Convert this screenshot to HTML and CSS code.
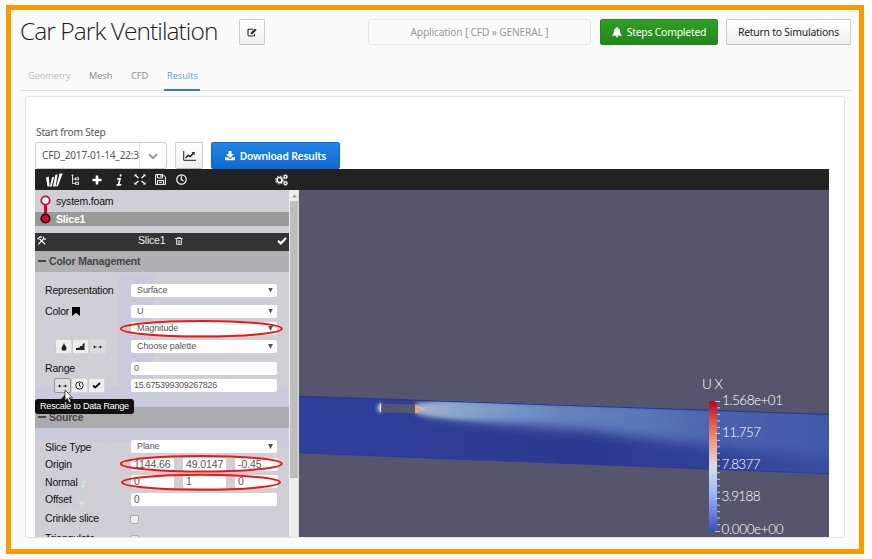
FILE: index.html
```html
<!DOCTYPE html>
<html lang="en">
<head>
<meta charset="utf-8">
<title>Car Park Ventilation</title>
<link rel="stylesheet" href="styles.css">
</head>
<body>
<div class="frame">
  <header class="header">
    <h1 class="title">Car Park Ventilation</h1>
    <button class="btn edit"><svg width="10" height="9" viewBox="0 0 10 9" fill="none" stroke="#222"><path d="M6 1.2H2.2Q1 1.2 1 2.4V6.8Q1 8 2.2 8H6.4Q7.6 8 7.6 6.8V5.8" stroke-width="1.1"/><path d="M3.8 6L4.2 4.4L8 .8L9.3 2.1L5.5 5.7Z" fill="#222" stroke-width=".5"/></svg></button>
    <div class="app-name"><span>Application [ CFD » GENERAL ]</span></div>
    <button class="btn green"><svg width="10" height="11" viewBox="0 0 10 11" fill="#fff"><path d="M5 0Q5.8 0 5.8 1Q8 1.5 8.1 4.4Q8.2 7.2 10 8.8H0Q1.800 7.200 1.900 4.400Q2 1.500 4.200 1Q4.200 0 5 0ZM3.700 9.300H6.300Q6 10.600 5 10.600Q4 10.600 3.700 9.300Z"/></svg><span>Steps Completed</span></button>
    <button class="btn return"><span>Return to Simulations</span></button>
  </header>
  <nav class="tabs">
    <a class="tab muted">Geometry</a><a class="tab mesh">Mesh</a><a class="tab cfd">CFD</a><a class="tab active">Results</a>
  </nav>
  <main class="card">
    <div class="step-label"><span>Start from Step</span></div>
    <div class="step-row">
      <div class="step-select"><span class="step-value">CFD_2017-01-14_22:3</span><span class="step-arrow"><svg width="10" height="7" viewBox="0 0 10 7" fill="none" stroke="#999" stroke-width="2"><path d="M1 1.200L5 5.200L9 1.200"/></svg></span></div>
      <button class="btn chart"><svg width="13" height="10" viewBox="0 0 13 10" fill="none" stroke="#222"><path d="M.7 0V9.300H13"/><path d="M2.500 7L5.300 4.300L7 5.800L10.500 2.200" stroke-width="1.500"/><path d="M8.500 1H11.700V4.200Z" fill="#222" stroke="none"/></svg></button>
      <button class="btn download"><svg width="10" height="10" viewBox="0 0 10 10" fill="#fff"><path d="M3.500 0H6.500V3.300H9L5 7L1 3.300H3.500ZM0 6.300H2.800L5 8.200L7.200 6.300H10V9.300H0Z"/></svg><span>Download Results</span></button>
    </div>
    <section class="viewer">
      <div class="toolbar">
        <svg class="t-logo" width="17" height="14" viewBox="0 0 17 14" fill="#fff"><path d="M0 4.500L2.800 3.500L3.600 13.500H1.400ZM6 4.500L8.200 3.500L5.800 13.500H3.900ZM9.300 2L11.500 1.300L9.700 13.500H7ZM13.600 .5H16.700L11.700 13.500H10.200Z"/></svg>
        <svg class="t-tree" width="8" height="11" viewBox="0 0 8 11" fill="none" stroke="#ddd"><path d="M1.500 1V9.500H4M1.500 5H4"/><circle cx="1.500" cy="1.500" r="1" fill="#ddd" stroke="none"/><rect x="4.500" y="3.800" width="3" height="2"/><rect x="4.500" y="8.300" width="3" height="2"/></svg>
        <svg class="t-plus" width="10" height="10" viewBox="0 0 10 10" stroke="#fff" stroke-width="2.600"><path d="M5 .5V9.500M.5 5H9.500"/></svg>
        <svg class="t-info" width="7" height="12" viewBox="0 0 7 12" fill="none" stroke="#fff"><path d="M4.800 .4L4.400 2.500M1.200 4.800H4L2.600 10.800H5.200M.6 10.800H2.600" stroke-width="1.700"/></svg>
        <svg class="t-expand" width="12" height="11" viewBox="0 0 12 11" fill="none" stroke="#fff"><path d="M1 1L4.500 4M11 1L7.500 4M1 10L4.500 7M11 10L7.500 7" stroke-width="1.300"/><path d="M.6 2.800V.6H3M9 .6H11.400V2.800M.6 8.200V10.400H3M9 10.400H11.400V8.200" stroke-width=".5"/></svg>
        <svg class="t-save" width="11" height="11" viewBox="0 0 11 11" fill="none" stroke="#fff"><path d="M.6 .6H8L10.400 3V10.400H.6ZM2.500 .6V4H7.500V.6M2.500 10V6.500H8.500V10M6 1V3M4 8.300H7"/></svg>
        <svg class="t-clock" width="11" height="11" viewBox="0 0 11 11" fill="none" stroke="#fff" stroke-width="1.200"><circle cx="5.500" cy="5.500" r="4.700"/><path d="M5.300 2.300V5.800L7.500 7"/></svg>
        <svg class="t-gears" width="13" height="12" viewBox="0 0 13 12" fill="none" stroke="#fff"><circle cx="4.500" cy="6" r="2.500" stroke-width="1.700"/><circle cx="4.500" cy="6" r="3.900" stroke-dasharray="1.700 1.360"/><circle cx="10.500" cy="2.700" r="1.400" stroke-width="1.200"/><circle cx="10.500" cy="2.700" r="2.200" stroke-width=".7" stroke-dasharray="1 .7"/><circle cx="10.500" cy="9.200" r="1.400" stroke-width="1.200"/><circle cx="10.500" cy="9.200" r="2.200" stroke-width=".7" stroke-dasharray="1 .7"/></svg>
      </div>
      <div class="stage">
        <aside class="panel">
          <div class="pipeline">
            <div class="node">system.foam</div>
            <div class="node selected">Slice1</div>
            <svg class="graph" width="16" height="36" viewBox="0 0 16 36"><path d="M10.500 10V28" stroke="#dd0031" stroke-width="3"/><circle cx="10.500" cy="10.500" r="4.200" fill="#fff" stroke="#dd0031" stroke-width="1.800"/><circle cx="10.500" cy="28.500" r="4.300" fill="#e4002b" stroke="#180408" stroke-width="1.500"/></svg>
          </div>
          <div class="control-bar">
            <svg class="c-tools" width="10" height="9" viewBox="0 0 11 10" fill="none" stroke="#fff" stroke-width="1.300"><path d="M1.500 9.200L7.300 3M7 .8Q6.500 3.700 10 3.500M2.800 3.200L9 9.200M.5 3.600L3.500 .8L5.300 1.200"/></svg>
            <span class="c-name">Slice1</span>
            <svg class="c-trash" width="8" height="8" viewBox="0 0 8 8" fill="none" stroke="#ddd"><path d="M0 1.500H8M2.500 1.500V.5H5.500V1.500M1.500 2V7.500H6.500V2M3.200 3V7M4.800 3V7" stroke-width=".9"/></svg>
            <svg class="c-check" width="10" height="8" viewBox="0 0 10 8" fill="none" stroke="#fff" stroke-width="2.300"><path d="M1 3.800L3.800 6.300L9 1"/></svg>
          </div>
          <div class="section-title"><i></i><span>Color Management</span></div>
          <div class="form color-form">
            <label>Representation</label><div class="field select">Surface</div>
            <label class="color-label">Color <svg width="8" height="9" viewBox="0 0 8 9"><path d="M0 0H8V9L4 5.800L0 9Z"/></svg></label><div class="field select">U</div>
            <label></label><div class="field select">Magnitude</div>
            <div class="tools upper">
              <b><svg width="6" height="8" viewBox="0 0 6 8"><path d="M3 0Q3.600 1.800 4.800 3.200Q6 5 5.300 6.400Q4.600 7.700 3 7.700Q1.400 7.700 .7 6.400Q0 5 1.200 3.200Q2.400 1.800 3 0Z"/></svg></b>
              <b><svg width="9" height="7" viewBox="0 0 9 7"><path d="M0 5H2V7H0ZM2 4.500H4V7H2ZM4 3H6.500V7H4ZM6.500 1L8.500 0V7H6.500Z"/></svg></b>
              <b class="flat"><svg width="9" height="4" viewBox="0 0 9 4"><path d="M0 2L2 .5V1.400H3.500V2.600H2V3.500ZM9 2L7 .5V1.400H5.500V2.600H7V3.500Z"/></svg></b>
            </div><div class="field select">Choose palette</div>
            <label>Range</label><div class="field">0</div>
            <div class="tools">
              <b class="hover"><svg width="9" height="4" viewBox="0 0 9 4"><path d="M0 2L2 .5V1.400H3.500V2.600H2V3.500ZM9 2L7 .5V1.400H5.500V2.600H7V3.500Z"/></svg></b>
              <b><svg width="9" height="9" viewBox="0 0 9 9" fill="none" stroke="#222"><circle cx="4.500" cy="4.500" r="3.700"/><path d="M4.500 2V5L6 5.600"/></svg></b>
              <b><svg width="9" height="7" viewBox="0 0 9 7" fill="none" stroke="#111" stroke-width="2"><path d="M1 3.500L3.300 5.500L8 1"/></svg></b>
            </div><div class="field number">15.675399309267826</div>
          </div>
          <div class="section-title source"><i></i><span>Source</span></div>
          <div class="form source-form">
            <label>Slice Type</label><div class="field select">Plane</div>
            <label>Origin</label><div class="triple"><div class="field">1144.66</div><div class="field">49.0147</div><div class="field">-0.45</div></div>
            <label>Normal</label><div class="triple"><div class="field">0</div><div class="field">1</div><div class="field">0</div></div>
            <label>Offset</label><div class="field offset">0</div>
            <label>Crinkle slice</label><div class="check"></div>
            <label>Triangulate</label><div class="check"></div>
          </div>
          <svg class="marks" width="264" height="347" viewBox="35 190 264 347">
            <g fill="none" stroke="#f21515" stroke-width="2"><ellipse cx="201.300" cy="328.700" rx="80.500" ry="7.800"/><ellipse cx="201.300" cy="463.800" rx="80.500" ry="7.800"/><ellipse cx="201" cy="482.300" rx="79" ry="7.500"/></g>
            <path d="M81.500 487V504" stroke="#b5dcb9"/><path d="M58 505.500H68M74 505.500H81" stroke="#dfbdba"/>
            <g fill="#e8e8ef" font-family="Lato, sans-serif" font-size="8"><text x="81" y="487">Z</text><text x="79" y="507">Y</text></g>
          </svg>
          <div class="tooltip">Rescale to Data Range</div>
          <svg class="cursor" width="10" height="15" viewBox="0 0 10 15"><path d="M1 1V11.500L3.300 9.400L5.100 13.500L6.900 12.700L5.200 8.800H8.500Z" fill="#fff" stroke="#222" stroke-width=".8"/></svg>
        </aside>
        <div class="scroll"><span></span><div class="thumb"></div></div>
        <svg class="canvas" width="530" height="347" viewBox="299 190 530 347">
          <defs>
            <linearGradient id="flow" x1="420" y1="0" x2="829" y2="0" gradientUnits="userSpaceOnUse"><stop offset="0" stop-color="#86a2d0"/><stop offset=".25" stop-color="#6d8cc4"/><stop offset=".55" stop-color="#5877b8"/><stop offset=".75" stop-color="#4961ad"/><stop offset="1" stop-color="#4259a9"/></linearGradient>
            <linearGradient id="plume" x1="417" y1="0" x2="560" y2="0" gradientUnits="userSpaceOnUse"><stop offset="0" stop-color="#a5b6cb"/><stop offset=".3" stop-color="#8aa4ca"/><stop offset="1" stop-color="#7896c9" stop-opacity="0"/></linearGradient>
            <linearGradient id="base" x1="300" y1="0" x2="829" y2="0" gradientUnits="userSpaceOnUse"><stop offset="0" stop-color="#2f3f9c"/><stop offset=".55" stop-color="#2d3990"/><stop offset=".8" stop-color="#32439a"/><stop offset="1" stop-color="#3a4e9f"/></linearGradient>
            <linearGradient id="scale" x1="0" y1="0" x2="0" y2="1"><stop offset="0" stop-color="#b40426"/><stop offset=".12" stop-color="#d8453b"/><stop offset=".3" stop-color="#f3977c"/><stop offset=".5" stop-color="#dddddd"/><stop offset=".7" stop-color="#9bbcff"/><stop offset="1" stop-color="#3b4cc0"/></linearGradient>
            <radialGradient id="halo"><stop offset="0" stop-color="#b9d2e5"/><stop offset="1" stop-color="#5478bd" stop-opacity="0"/></radialGradient>
            <filter id="soft" x="-20%" y="-40%" width="140%" height="180%"><feGaussianBlur stdDeviation="6"/></filter>
            <filter id="small" x="-20%" y="-50%" width="140%" height="200%"><feGaussianBlur stdDeviation="2"/></filter>
            <clipPath id="duct"><path d="M299 395.700L829 413.700V474.300L299 453.300Z"/></clipPath>
          </defs>
          <rect x="299" y="190" width="530" height="347" fill="#55566d"/>
          <g clip-path="url(#duct)">
            <rect x="299" y="390" width="530" height="90" fill="url(#base)"/>
            <path d="M424 406L450 396L850 404V460Q700 446 590 430Q480 423 424 412Z" fill="url(#flow)" filter="url(#soft)"/>
            <path d="M416 403Q450 400 570 405V420Q470 424 416 414Z" fill="url(#plume)" filter="url(#small)"/>
            <ellipse cx="380" cy="408" rx="6" ry="8" fill="url(#halo)"/>
            <path d="M299 396.200L829 414.200" stroke="#2b378a" stroke-width="1.500"/>
            <path d="M299 452.800L829 473.800" stroke="#2d3b9a" stroke-width="1"/>
            <path d="M380.500 403.500L415.500 404.500V413.500L380.500 412.300Z" fill="#55566d"/>
            <path d="M380.500 403.500V412" stroke="#e1e6cf" stroke-width="1.300"/>
            <path d="M415 404.500L419 405.500L421.500 409L419 412.500L415 413.500Z" fill="#dda78d"/><path d="M420 406.500L427 409L420 411.500Z" fill="#c9bcb8" opacity=".7"/>
          </g>
          <rect x="709" y="401.300" width="8" height="130" fill="url(#scale)"/>
          <path d="M717 407.900H720M717 414.400H720M717 420.900H720M717 427.400H720M717 440.400H720M717 446.800H720M717 453.300H720M717 459.800H720M717 472.800H720M717 479.300H720M717 485.800H720M717 492.200H720M717 505.200H720M717 511.700H720M717 518.200H720M717 524.700H720M715 401.500H720M715 433.500H720M715 466H720M715 498.500H720M715 531.500H720" stroke="#d5d5dc" stroke-width=".9"/>
          <g class="legend">
            <text x="702" y="389" textLength="21">U X</text>
            <text x="722" y="404.500" textLength="61">1.568e+01</text>
            <text x="722" y="436.700" textLength="39">11.757</text>
            <text x="721.500" y="469" textLength="39">7.8377</text>
            <text x="721.500" y="501.300" textLength="39">3.9188</text>
            <text x="721.500" y="533.700" textLength="62">0.000e+00</text>
          </g>
        </svg>
      </div>
    </section>
  </main>
</div>
</body>
</html>
```

FILE: styles.css
```css
* { box-sizing: border-box; }
body { margin: 0; padding: 5px 8px 5px 6px; width: 872px; height: 559px; background: #fff; overflow: hidden; font-family: "Noto Sans", sans-serif; }
svg { display: block; flex: none; }
.frame { width: 858px; height: 549px; border: 5px solid #ff9900; background: #fafafa; }

.header { display: flex; height: 51px; padding: 9px 8px 0 9px; }
.title { margin: -9px 0 0; width: 219px; height: 44px; line-height: 42px; font-family: "Open Sans", sans-serif; font-weight: 300; font-size: 24.500px; letter-spacing: -.93px; white-space: nowrap; color: #1c1c1c; }
.btn { display: flex; align-items: center; justify-content: center; height: 26px; padding: 0; border: 1px solid #ccc; border-bottom-color: #bbb; border-radius: 2px; background: linear-gradient(#fff, #f0f0f0); font: 10.400px "Noto Sans", sans-serif; letter-spacing: -.22px; color: #222; white-space: nowrap; }
.edit { width: 26px; }
.app-name { display: flex; align-items: center; justify-content: center; width: 223px; height: 26px; margin-left: 103px; border: 1px solid #e4e4e4; border-radius: 3px; font-size: 10.200px; letter-spacing: -.16px; color: #999; white-space: nowrap; }
.green { width: 118px; margin-left: 9px; gap: 5px; color: #fff; background: linear-gradient(#2fa024, #23861b); border-color: #26891e; }
.return { width: 125px; margin-left: 8px; }

.tabs { display: flex; height: 30px; margin: 0 8px 0 9px; padding-left: 2px; border-bottom: 1px solid #ddd; font: 9.200px/30px "Open Sans", sans-serif; }
.tab { height: 30px; padding-left: 6px; color: #888; }
.muted { width: 61px; color: #bbb; }
.mesh { width: 42px; }
.cfd { width: 39px; }
.active { width: 36px; padding-left: 3px; color: #5a9fd4; border-bottom: 2px solid #3f78b5; }

.card { width: 820px; height: 442px; margin: 5px 0 0 14px; padding: 0 15px 0 9px; border: 1px solid #e5e5e5; border-radius: 3px; background: #fff; }
.step-label { height: 45px; padding: 27px 0 0 1px; line-height: 16px; font-size: 10.200px; letter-spacing: -.2px; color: #555; }
.step-row { display: flex; height: 27px; }
.step-select { display: flex; width: 132px; height: 27px; border: 1px solid #ccc; border-radius: 3px; font-size: 10.100px; letter-spacing: -.2px; line-height: 25px; color: #555; }
.step-value { width: 104px; padding-left: 6px; overflow: hidden; white-space: nowrap; border-right: 1px solid #e3e3e3; }
.step-arrow { flex: 1; display: flex; align-items: center; justify-content: center; padding-top: 2px; }
.chart { width: 28px; height: 27px; margin-left: 8px; }
.download { width: 129px; height: 27px; margin-left: 8px; gap: 5px; background: linear-gradient(#1f85e3, #1269d3); border-color: #1567c5; color: #fff; font-weight: 600; font-size: 10.300px; letter-spacing: -.2px; }

.viewer { width: 794px; height: 368px; overflow: hidden; }
.toolbar { display: flex; align-items: center; height: 21px; padding-left: 11px; background: #222; }
.t-tree { margin-left: 8px; }
.t-plus { margin-left: 13px; }
.t-info { margin-left: 14px; }
.t-expand { margin-left: 11px; }
.t-save { margin-left: 9px; }
.t-clock { margin-left: 10px; }
.t-gears { margin-left: 88px; }
.stage { display: flex; height: 347px; }
.panel { position: relative; width: 254px; height: 347px; overflow: hidden; background: #d0cfd5; font: 10.500px "Liberation Sans", sans-serif; letter-spacing: -.2px; color: #111; }
.pipeline { position: relative; height: 43px; }
.node { height: 22px; padding-left: 21px; line-height: 22px; }
.selected { height: 14px; line-height: 14px; background: #999; color: #fff; font-weight: bold; }
.graph { position: absolute; left: 0; top: 0; }
.control-bar { display: flex; align-items: center; height: 18px; padding: 0 2px; background: #333; color: #eee; }
.c-tools { margin-top: -3px; }
.c-name { width: 37px; margin-left: 91px; line-height: 14px; padding-bottom: 4px; }
.c-trash { margin-top: -3px; }
.c-check { margin: -3px 0 0 auto; }
.section-title { display: flex; align-items: center; gap: 3px; height: 21px; padding: 0 0 1px 3px; background: #b0b0b2; font-weight: bold; color: #444; }
.section-title i { width: 8px; height: 2px; background: #444; }
.form { display: grid; grid-template-columns: 86px 146px; padding-left: 10px; align-items: center; }
.form label { display: flex; align-items: center; white-space: nowrap; }
.color-form { height: 135px; padding-top: 8px; grid-template-rows: 20px 22px 13px 23px 20px 15px 14px; background: linear-gradient(#c9cbdc, #c9cbdc) 0 115px / 254px 20px no-repeat, linear-gradient(#c9cbdc, #c9cbdc) 84px 3px / 35px 132px no-repeat; }
.source { background: #aaaab1; }
.source-form { padding-top: 10px; grid-template-rows: 17px 18px 17px 18px 19px 22px; background: linear-gradient(182deg, #c9cbdc 19px, #d0cfd5 21px); }
.color-label { gap: 3px; }
.field { height: 13px; padding-left: 3px; border-radius: 2px; background: #fff; font-size: 9px; line-height: 13px; letter-spacing: -.1px; color: #555; white-space: nowrap; }
.number { letter-spacing: -.25px; }
.offset { font-size: 10px; }
.select { display: flex; justify-content: space-between; padding: 0 4px 0 6px; }
.select::after { content: ""; width: 5px; height: 5px; margin-top: 4px; background: #555; clip-path: polygon(0 0, 100% 0, 50% 100%); }
.triple { display: grid; grid-template-columns: 43px 43px 43px; gap: 9px; }
.triple .field { font-size: 10.500px; }
.check { width: 9px; height: 9px; margin-top: 3px; margin-left: -1px; border: 1px solid #aaa; border-radius: 2px; background: #eee; }
.tools { display: flex; padding-left: 9px; }
.upper { padding-left: 10px; }
.tools b { display: flex; align-items: center; justify-content: center; width: 17px; height: 15px; border: 1px solid #d6d6d8; border-left-color: #ccc; border-radius: 2px; background: #eee; }
.tools .flat { background: #dcdcdf; }
.tools .hover { border-color: #999; background: #ddd; }
.tools svg { fill: #222; }
.tools svg[fill="none"] { fill: none; }
.marks { position: absolute; left: 0; top: 0; }
.tooltip { position: absolute; left: 0; top: 209px; width: 99px; height: 15px; border-radius: 3px; background: #111; color: #fff; font-size: 9px; line-height: 14px; text-align: center; white-space: nowrap; }
.tooltip::before { content: ""; position: absolute; left: 26px; top: -5px; border: 5px solid transparent; border-top: 0; border-bottom-color: #111; }
.cursor { position: absolute; left: 29px; top: 199px; }
.scroll { width: 10px; padding-left: 1px; background: #eee; border-right: 1px solid #ddd; }
.scroll span { display: block; width: 5px; height: 11px; margin-left: 2px; background: #999; clip-path: polygon(50% 40%, 100% 68%, 0 68%); }
.thumb { width: 8px; height: 277px; background: #bebebe; }
.legend { font-family: Lato, sans-serif; font-size: 13.500px; font-weight: 300; fill: #fff; }
```
